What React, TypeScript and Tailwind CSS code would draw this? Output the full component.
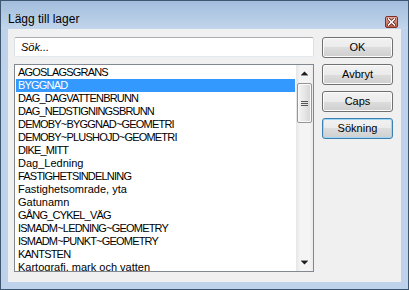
import React from "react";

const layers = [
  "AGOSLAGSGRANS",
  "BYGGNAD",
  "DAG_DAGVATTENBRUNN",
  "DAG_NEDSTIGNINGSBRUNN",
  "DEMOBY~BYGGNAD~GEOMETRI",
  "DEMOBY~PLUSHOJD~GEOMETRI",
  "DIKE_MITT",
  "Dag_Ledning",
  "FASTIGHETSINDELNING",
  "Fastighetsomrade, yta",
  "Gatunamn",
  "GÅNG_CYKEL_VÄG",
  "ISMADM~LEDNING~GEOMETRY",
  "ISMADM~PUNKT~GEOMETRY",
  "KANTSTEN",
  "Kartografi, mark och vatten",
];

const btn =
  "h-[21px] w-[71px] rounded-[3px] border text-[11px] leading-none text-black flex items-center justify-center bg-[linear-gradient(#f2f2f2_0%,#ebebeb_50%,#dddddd_50%,#cfcfcf_100%)]";

function Button({ label, focused }: { label: string; focused?: boolean }) {
  return (
    <div
      className={
        focused
          ? `${btn} border-[#3c7fb1] shadow-[inset_0_0_0_1px_#9fd5f5]`
          : `${btn} border-[#707070] shadow-[inset_0_0_0_1px_#fbfbfb]`
      }
    >
      {label}
    </div>
  );
}

export default function App() {
  return (
    <div
      className="w-[409px] h-[290px] border border-[#3f5670] flex flex-col bg-[#bed3eb] overflow-hidden"
      style={{ fontFamily: '"Liberation Sans", Arial, sans-serif' }}
    >
      {/* title bar */}
      <div className="h-[28px] shrink-0 flex items-start justify-between pl-[7px] pr-[10px] bg-[linear-gradient(#a2bddc,#c2d6ec)]">
        <span className="mt-[11px] text-[12px] leading-[14px] text-black">Lägg till lager</span>
        <div className="mt-[15px] w-[13px] h-[12px] rounded-[2px] border border-[#7c3027] bg-[linear-gradient(#e9a79b,#c75a4a)] flex items-center justify-center">
          <svg width="9" height="8" viewBox="0 0 9 8">
            <path d="M1.5 1 L7.5 7 M7.5 1 L1.5 7" stroke="#4a1a14" strokeWidth="3" strokeLinecap="square" />
            <path d="M1.5 1 L7.5 7 M7.5 1 L1.5 7" stroke="#ffffff" strokeWidth="1.6" strokeLinecap="square" />
          </svg>
        </div>
      </div>

      {/* client area */}
      <div className="mx-[7px] h-[253px] shrink-0 bg-[#f0f0f0] flex gap-[8px] pt-[8px] pl-[6px]">
        <div className="w-[300px] flex flex-col gap-[7px]">
          <div className="h-[20px] rounded-[2px] border border-[#abadb3] border-l-[#dbdfe6] border-r-[#dbdfe6] border-b-[#e3e9ef] bg-white flex items-center pl-[6px] text-[11px] italic text-black">
            Sök...
          </div>
          <div className="h-[208px] border border-[#828790] bg-white flex">
            <div className="flex-1 p-px overflow-hidden">
              {layers.map((name, i) => (
                <div
                  key={name}
                  className={`h-[13px] px-[2px] text-[11px] leading-[13px] whitespace-nowrap ${
                    i === 1 ? "bg-[#3399ff] text-white" : "text-black"
                  } ${name === name.toUpperCase() ? "tracking-[-0.8px]" : ""}`}
                >
                  {name}
                </div>
              ))}
            </div>
            {/* scrollbar */}
            <div className="w-[17px] flex flex-col bg-[linear-gradient(90deg,#e6e6e6,#f4f4f4_25%,#f4f4f4_80%,#ebebeb)]">
              <div className="h-[17px] flex items-center justify-center">
                <svg width="7" height="5" viewBox="0 0 7 5">
                  <polygon points="3.5,0.5 7,4 0,4" fill="#1e1e1e" />
                  <rect x="0" y="4" width="7" height="1" fill="#9a9a9a" />
                </svg>
              </div>
              <div className="mt-px mx-px h-[40px] rounded-[2px] border border-[#959595] bg-[linear-gradient(90deg,#f5f5f5,#e6e6e6_50%,#d4d4d4)] shadow-[inset_0_0_0_1px_#fafafa] flex flex-col items-center justify-center gap-[1px]">
                <div className="w-[7px] h-px bg-[#555]" />
                <div className="w-[7px] h-px bg-[#555]" />
                <div className="w-[7px] h-px bg-[#555]" />
              </div>
              <div className="flex-1" />
              <div className="h-[17px] flex items-center justify-center">
                <svg width="7" height="5" viewBox="0 0 7 5">
                  <rect x="0" y="0" width="7" height="1" fill="#9a9a9a" />
                  <polygon points="0,1 7,1 3.5,4.5" fill="#1e1e1e" />
                </svg>
              </div>
            </div>
          </div>
        </div>
        <div className="flex flex-col gap-[6px]">
          <Button label="OK" />
          <Button label="Avbryt" />
          <Button label="Caps" />
          <Button label="Sökning" focused />
        </div>
      </div>
    </div>
  );
}
